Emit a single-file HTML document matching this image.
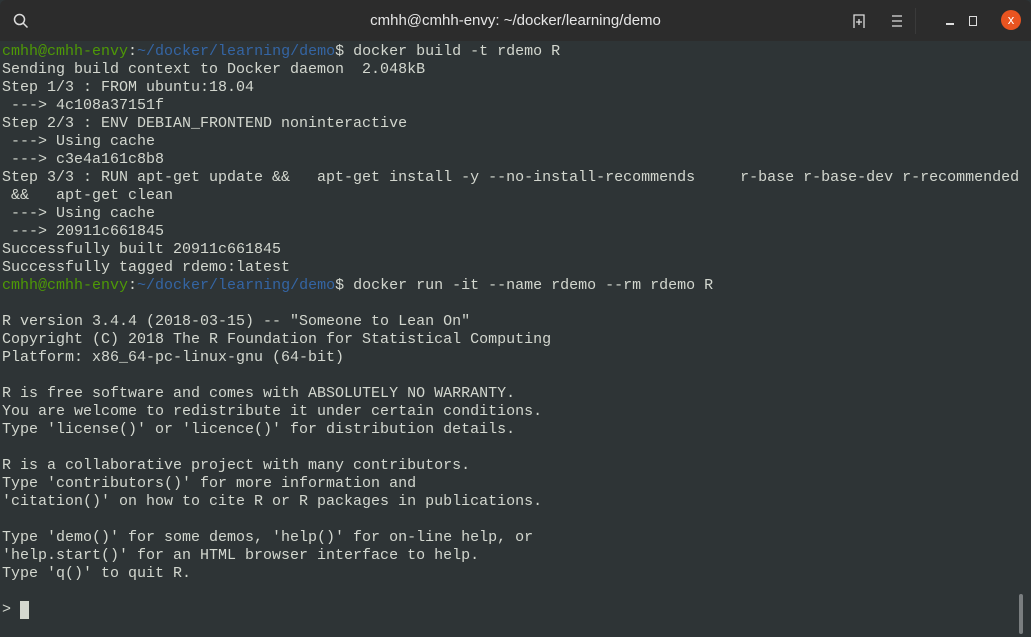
<!DOCTYPE html>
<html><head><style>
html,body{margin:0;padding:0;width:1031px;height:637px;overflow:hidden;background:#2e3436}
#tb{position:absolute;left:0;top:0;width:1031px;height:41px;background:#2c2c2c;border-radius:6px 6px 0 0}
#title{position:absolute;left:0;right:0;top:12px;text-align:center;color:#e6e6e6;font:15px "Liberation Sans",sans-serif}
pre{position:absolute;left:2px;top:43px;margin:0;font:15px/18px "Liberation Mono",monospace;color:#d3d7cf}
.g{color:#4e9a06}.b{color:#3465a4}
.cur{display:inline-block;width:9px;height:18px;background:#d3d7cf;vertical-align:top}
#sb{position:absolute;left:1019px;top:594px;width:4px;height:40px;background:#7a7e80;border-radius:2px}
</style></head><body>
<div id="tb">
<svg style="position:absolute;left:13px;top:13px" width="16" height="16" viewBox="0 0 16 16"><circle cx="6.5" cy="6.5" r="5" fill="none" stroke="#ddd" stroke-width="1.5"/><path d="M10 10l4.5 4.5" stroke="#ddd" stroke-width="1.5"/></svg>
<div id="title">cmhh@cmhh-envy: ~/docker/learning/demo</div>
<svg style="position:absolute;left:852px;top:13px" width="16" height="16" viewBox="0 0 16 16"><path d="M2 15V2h10v13M7 6v6M4 9h6" fill="none" stroke="#ddd" stroke-width="1.3"/></svg>
<svg style="position:absolute;left:890px;top:14px" width="14" height="14" viewBox="0 0 14 14"><path d="M2 2h10M2 7h10M2 12h10" stroke="#ddd" stroke-width="1.3"/></svg>
<div style="position:absolute;left:915px;top:8px;width:1px;height:26px;background:#3a3a3a"></div>
<div style="position:absolute;left:946px;top:23px;width:8px;height:1.5px;background:#ddd"></div>
<div style="position:absolute;left:969px;top:16px;width:6px;height:8px;border:1.3px solid #ddd"></div>
<div style="position:absolute;left:1001px;top:10px;width:20px;height:20px;border-radius:50%;background:#e95420;color:#fff;font:13px/20px 'Liberation Sans',sans-serif;text-align:center">x</div>
</div>
<pre><span class="g">cmhh@cmhh-envy</span>:<span class="b">~/docker/learning/demo</span>$ docker build -t rdemo R
Sending build context to Docker daemon  2.048kB
Step 1/3 : FROM ubuntu:18.04
 ---&gt; 4c108a37151f
Step 2/3 : ENV DEBIAN_FRONTEND noninteractive
 ---&gt; Using cache
 ---&gt; c3e4a161c8b8
Step 3/3 : RUN apt-get update &amp;&amp;   apt-get install -y --no-install-recommends     r-base r-base-dev r-recommended
 &amp;&amp;   apt-get clean
 ---&gt; Using cache
 ---&gt; 20911c661845
Successfully built 20911c661845
Successfully tagged rdemo:latest
<span class="g">cmhh@cmhh-envy</span>:<span class="b">~/docker/learning/demo</span>$ docker run -it --name rdemo --rm rdemo R

R version 3.4.4 (2018-03-15) -- "Someone to Lean On"
Copyright (C) 2018 The R Foundation for Statistical Computing
Platform: x86_64-pc-linux-gnu (64-bit)

R is free software and comes with ABSOLUTELY NO WARRANTY.
You are welcome to redistribute it under certain conditions.
Type 'license()' or 'licence()' for distribution details.

R is a collaborative project with many contributors.
Type 'contributors()' for more information and
'citation()' on how to cite R or R packages in publications.

Type 'demo()' for some demos, 'help()' for on-line help, or
'help.start()' for an HTML browser interface to help.
Type 'q()' to quit R.

&gt; <span class="cur"></span></pre>
<div id="sb"></div>
</body></html>
